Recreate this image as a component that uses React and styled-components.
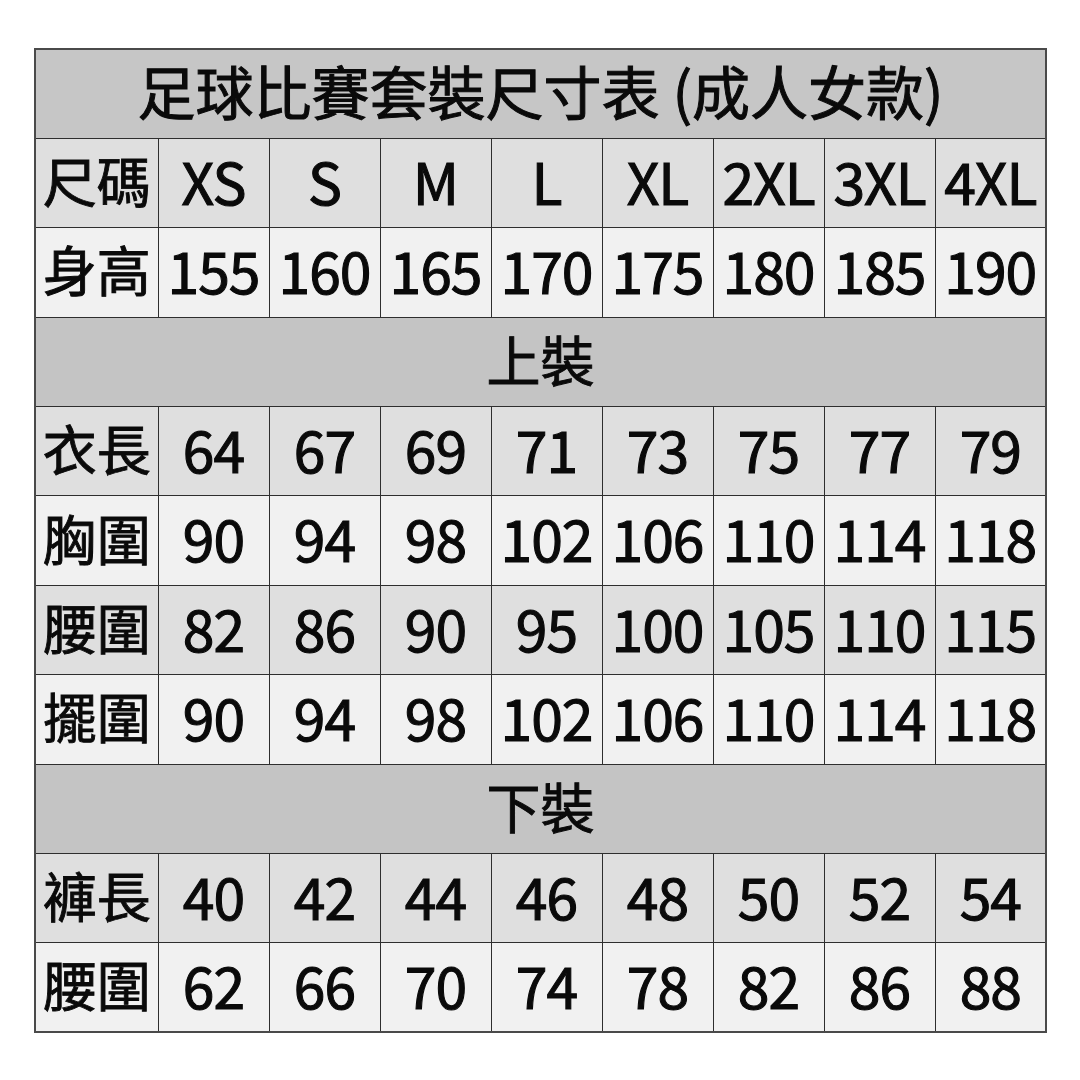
import React from "react";
import styled, { createGlobalStyle } from "styled-components";

const Global = createGlobalStyle`
  html, body { margin: 0; padding: 0; background: #ffffff; }
  body { width: 1080px; height: 1080px; overflow: hidden; }
`;

const Page = styled.div`
  width: 1080px;
  height: 1080px;
  box-sizing: border-box;
  padding: 48px 0 0 34px;
  background: #ffffff;
`;

const Table = styled.table`
  width: 1012px;
  border-collapse: collapse;
  table-layout: fixed;
  border: 2px solid #4a4a4a;
  font-family: "Noto Sans CJK TC", "Noto Sans", sans-serif;
  color: #0a0a0a;
`;

const Row = styled.tr`
  height: 89.4px;
  background: ${(p) => p.$bg};
`;

const Cell = styled.td`
  text-align: center;
  vertical-align: middle;
  line-height: 1;
  border: 1.5px solid #2e2e2e;
  padding: 0 0 6px 0;
  white-space: nowrap;
  font-weight: 400;
  -webkit-text-stroke: 1.1px #0a0a0a;
`;

const TitleCell = styled(Cell)`
  background: #c6c6c6;
  font-size: 58px;
  padding-bottom: 8px;
  -webkit-text-stroke: 1px #0a0a0a;
`;

const SectionCell = styled(Cell)`
  background: #c4c4c4;
  font-size: 54px;
  -webkit-text-stroke: 0.9px #0a0a0a;
`;

const LabelCell = styled(Cell)`
  font-size: 54px;
  -webkit-text-stroke: 0.9px #0a0a0a;
`;

const ValueCell = styled(Cell)`
  font-size: 57px;
  letter-spacing: -1px;
`;

const DARK = "#dfdfdf";
const LIGHT = "#f1f1f1";

const rows = [
  { type: "title", text: "足球比賽套裝尺寸表 (成人女款)" },
  { label: "尺碼", bg: DARK, values: ["XS", "S", "M", "L", "XL", "2XL", "3XL", "4XL"] },
  { label: "身高", bg: LIGHT, values: ["155", "160", "165", "170", "175", "180", "185", "190"] },
  { type: "section", text: "上裝" },
  { label: "衣長", bg: DARK, values: ["64", "67", "69", "71", "73", "75", "77", "79"] },
  { label: "胸圍", bg: LIGHT, values: ["90", "94", "98", "102", "106", "110", "114", "118"] },
  { label: "腰圍", bg: DARK, values: ["82", "86", "90", "95", "100", "105", "110", "115"] },
  { label: "擺圍", bg: LIGHT, values: ["90", "94", "98", "102", "106", "110", "114", "118"] },
  { type: "section", text: "下裝" },
  { label: "褲長", bg: DARK, values: ["40", "42", "44", "46", "48", "50", "52", "54"] },
  { label: "腰圍", bg: LIGHT, values: ["62", "66", "70", "74", "78", "82", "86", "88"] },
];

export default function App() {
  return (
    <>
      <Global />
      <Page>
        <Table>
          <colgroup>
            <col style={{ width: 123 }} />
            {Array.from({ length: 8 }).map((_, i) => (
              <col key={i} style={{ width: 111 }} />
            ))}
          </colgroup>
          <tbody>
            {rows.map((r, i) => {
              if (r.type === "title") {
                return (
                  <Row key={i} $bg="#c6c6c6">
                    <TitleCell colSpan={9}>{r.text}</TitleCell>
                  </Row>
                );
              }
              if (r.type === "section") {
                return (
                  <Row key={i} $bg="#c4c4c4">
                    <SectionCell colSpan={9}>{r.text}</SectionCell>
                  </Row>
                );
              }
              return (
                <Row key={i} $bg={r.bg}>
                  <LabelCell>{r.label}</LabelCell>
                  {r.values.map((v, j) => (
                    <ValueCell key={j}>{v}</ValueCell>
                  ))}
                </Row>
              );
            })}
          </tbody>
        </Table>
      </Page>
    </>
  );
}
